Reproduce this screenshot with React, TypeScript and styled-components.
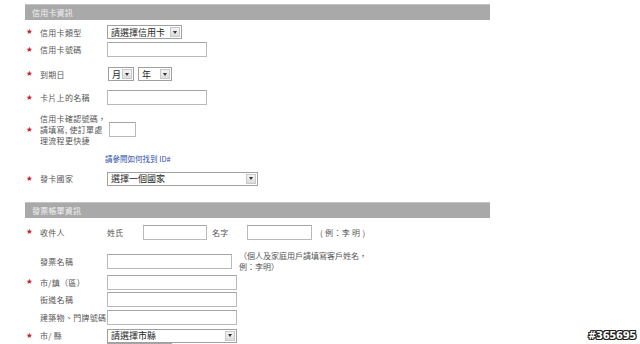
import React from "react"
import styled, { createGlobalStyle } from "styled-components"

const GlobalStyle = createGlobalStyle`
  html, body {
    margin: 0;
    padding: 0;
    background: #ffffff;
  }
  body {
    font-family: "Noto Sans CJK TC", "Noto Sans", "Liberation Sans", sans-serif;
  }
`

const Screen = styled.div`
  position: relative;
  width: 640px;
  height: 344px;
  overflow: hidden;
  background: #fff;
`

const Form = styled.div`
  width: 465px;
  margin-left: 25px;
  padding-top: 4px;
`

const SectionBar = styled.div<{ $mt?: number }>`
  display: flex;
  align-items: center;
  height: 16px;
  margin-top: ${p => p.$mt || 0}px;
  padding-left: 7px;
  background: #a9a9a9;
  border-top: 1px solid #c4c4c4;
  box-sizing: border-box;
  color: #f2f2f2;
  font-size: 8px;
  letter-spacing: 0.2px;
`

const Row = styled.div<{ $h: number; $mt: number }>`
  display: grid;
  grid-template-columns: 15px 67px 1fr;
  align-items: center;
  height: ${p => p.$h}px;
  margin-top: ${p => p.$mt}px;
`

const Star = styled.span`
  padding-left: 1px;
  color: #c8202a;
  font-family: "DejaVu Sans", sans-serif;
  font-size: 7.5px;
  line-height: 1;
`

const Label = styled.span`
  color: #555;
  font-size: 8px;
  letter-spacing: 0.3px;
  line-height: 11px;
  white-space: nowrap;
`

const Field = styled.div`
  display: flex;
  align-items: center;
  height: 100%;
`

const TextInput = styled.div<{ $w: number; $ml?: number }>`
  width: ${p => p.$w}px;
  height: 15px;
  margin-left: ${p => p.$ml || 0}px;
  box-sizing: border-box;
  border: 1px solid #b9b9b9;
  border-top-color: #a5a5a5;
  background: #fff;
  flex-shrink: 0;
`

const SelectBox = styled.div<{ $w: number; $ml?: number }>`
  display: flex;
  align-items: center;
  justify-content: space-between;
  width: ${p => p.$w}px;
  height: 14px;
  margin-left: ${p => p.$ml || 0}px;
  padding: 0 1px 0 3px;
  box-sizing: border-box;
  border: 1px solid #a0a0a0;
  background: #fff;
  color: #1e1e1e;
  font-size: 9px;
  flex-shrink: 0;
`

const DropButton = styled.span`
  display: flex;
  align-items: center;
  justify-content: center;
  width: 10px;
  height: 10px;
  box-sizing: border-box;
  border: 1px solid #c9c9c9;
  background: linear-gradient(#f4f4f4, #dcdcdc);
  &::after {
    content: "";
    border-left: 2px solid transparent;
    border-right: 2px solid transparent;
    border-top: 3px solid #333;
  }
`

const Inline = styled.span<{ $w?: number; $pl?: number; $ml?: number }>`
  display: inline-block;
  width: ${p => (p.$w ? p.$w + "px" : "auto")};
  padding-left: ${p => p.$pl || 0}px;
  margin-left: ${p => p.$ml || 0}px;
  box-sizing: border-box;
  color: #555;
  font-size: 8px;
  letter-spacing: 0.3px;
  flex-shrink: 0;
`

const Note = styled.span`
  width: 140px;
  margin-left: 7px;
  color: #555;
  font-size: 8px;
  line-height: 11px;
  letter-spacing: 0;
  flex-shrink: 0;
`

const HelpLink = styled.a`
  margin-left: -2px;
  color: #2f4fa8;
  font-size: 7.5px;
  text-decoration: none;
`

const Watermark = styled.div`
  position: absolute;
  right: 4px;
  bottom: 3px;
  color: #fff;
  font-family: "DejaVu Sans", sans-serif;
  font-weight: bold;
  font-size: 10px;
  letter-spacing: -0.3px;
  text-shadow: -1px 0 #222, 1px 0 #222, 0 -1px #222, 0 1px #222, 1px 1px #222,
    -1px -1px #222, 1px -1px #222, -1px 1px #222;
`

const Select = ({ w, ml, text }: { w: number; ml?: number; text: string }) => (
  <SelectBox $w={w} $ml={ml}>
    <span>{text}</span>
    <DropButton />
  </SelectBox>
)

const Req = () => <Star>★</Star>

export default function App() {
  return (
    <Screen>
      <GlobalStyle />
      <Form>
        <SectionBar>信用卡資訊</SectionBar>

        <Row $h={14} $mt={5}>
          <Req />
          <Label>信用卡類型</Label>
          <Field>
            <Select w={75} text="請選擇信用卡" />
          </Field>
        </Row>

        <Row $h={15} $mt={3}>
          <Req />
          <Label>信用卡號碼</Label>
          <Field>
            <TextInput $w={100} />
          </Field>
        </Row>

        <Row $h={14} $mt={10}>
          <Req />
          <Label>到期日</Label>
          <Field>
            <Select w={26} ml={1} text="月" />
            <Select w={34} ml={4} text="年" />
          </Field>
        </Row>

        <Row $h={15} $mt={9}>
          <Req />
          <Label>卡片上的名稱</Label>
          <Field>
            <TextInput $w={100} />
          </Field>
        </Row>

        <Row $h={33} $mt={8}>
          <Req />
          <Label>
            信用卡確認號碼，
            <br />
            請填寫, 使訂單處
            <br />
            理流程更快捷
          </Label>
          <Field>
            <TextInput $w={27} $ml={2} />
          </Field>
        </Row>

        <Row $h={12} $mt={6}>
          <span />
          <span />
          <Field>
            <HelpLink href="#">請參閱如何找到 ID#</HelpLink>
          </Field>
        </Row>

        <Row $h={15} $mt={7}>
          <Req />
          <Label>發卡國家</Label>
          <Field>
            <Select w={151} text="選擇一個國家" />
          </Field>
        </Row>

        <SectionBar $mt={16}>發票帳單資訊</SectionBar>

        <Row $h={16} $mt={6}>
          <Req />
          <Label>收件人</Label>
          <Field>
            <Inline $w={36}>姓氏</Inline>
            <TextInput $w={64} />
            <Inline $w={40} $pl={5}>
              名字
            </Inline>
            <TextInput $w={65} />
            <Inline $ml={8}>( 例：李 明 )</Inline>
          </Field>
        </Row>

        <Row $h={15} $mt={10}>
          <span />
          <Label>發票名稱</Label>
          <Field>
            <TextInput $w={125} />
            <Note>（個人及家庭用戶請填寫客戶姓名，例：李明）</Note>
          </Field>
        </Row>

        <Row $h={16} $mt={9}>
          <Req />
          <Label>市/鎮（區）</Label>
          <Field>
            <TextInput $w={130} />
          </Field>
        </Row>

        <Row $h={15} $mt={2}>
          <span />
          <Label>街道名稱</Label>
          <Field>
            <TextInput $w={130} />
          </Field>
        </Row>

        <Row $h={15} $mt={3}>
          <span />
          <Label>建築物、門牌號碼</Label>
          <Field>
            <TextInput $w={130} />
          </Field>
        </Row>

        <Row $h={15} $mt={3}>
          <Req />
          <Label>市/ 縣</Label>
          <Field>
            <Select w={130} text="請選擇市縣" />
          </Field>
        </Row>

        <Row $h={15} $mt={0}>
          <span />
          <span />
          <Field>
            <TextInput $w={65} />
          </Field>
        </Row>
      </Form>
      <Watermark>#365695</Watermark>
    </Screen>
  )
}
